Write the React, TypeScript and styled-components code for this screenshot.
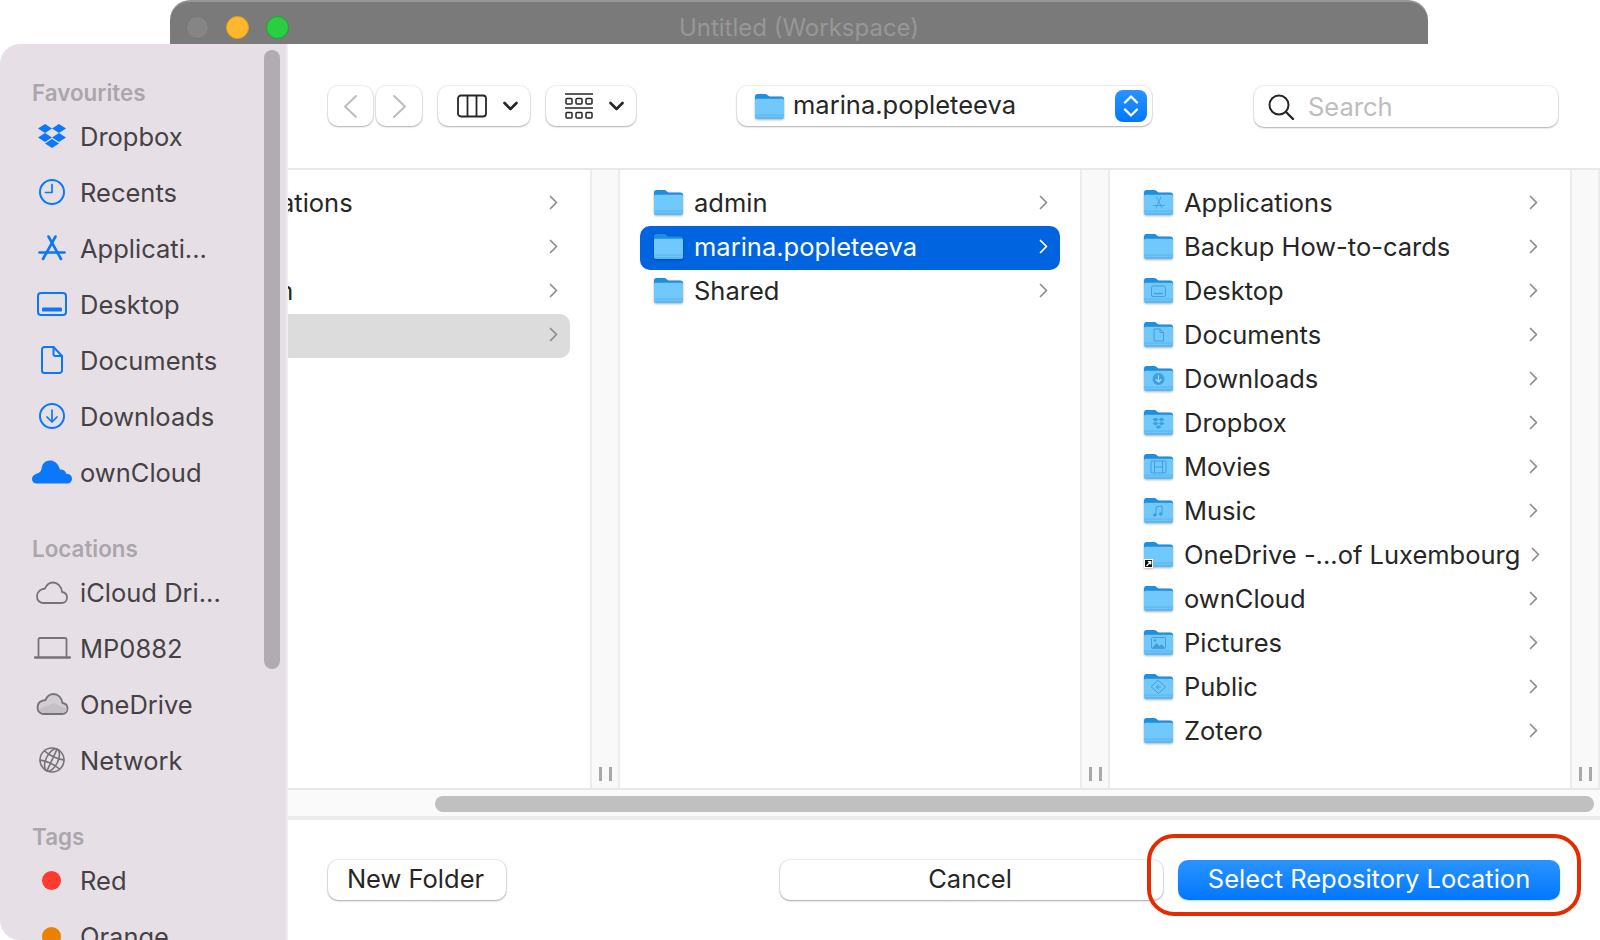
import styled, { createGlobalStyle } from "styled-components";
import { ReactNode } from "react";

const GlobalStyle = createGlobalStyle`
  html, body {
    margin: 0;
    padding: 0;
    width: 1600px;
    height: 940px;
    overflow: hidden;
    background: #fff;
    font-family: "Inter", "Liberation Sans", sans-serif;
  }
  * { box-sizing: border-box; }
`;

const Page = styled.div`
  width: 1600px;
  height: 940px;
  display: flex;
  flex-direction: column;
  overflow: hidden;
`;

const TitleBar = styled.div`
  flex: none;
  position: relative;
  margin-left: 170px;
  width: 1258px;
  height: 44px;
  background: #7a7a7a;
  border-top: 2px solid #969696;
  border-radius: 20px 20px 0 0;
  display: flex;
  align-items: center;
  padding: 8px 0 0 16px;
  gap: 17px;
`;

const Light = styled.span<{ $fill: string; $ring: string }>`
  width: 23px;
  height: 23px;
  border-radius: 50%;
  background: ${(p) => p.$fill};
  border: 1px solid ${(p) => p.$ring};
`;

const WindowTitle = styled.div`
  position: absolute;
  left: 0;
  right: 0;
  top: 11px;
  text-align: center;
  color: #979797;
  font-size: 24px;
  line-height: 30px;
`;

const Body = styled.div`
  flex: 1;
  display: flex;
  min-height: 0;
`;

const Sidebar = styled.aside`
  flex: none;
  position: relative;
  width: 288px;
  height: 896px;
  overflow: hidden;
  padding-top: 33px;
  background: #e6e0e6;
  border-right: 2px solid #efecef;
  border-radius: 20px 0 0 20px;
`;

const SideScroll = styled.div`
  position: absolute;
  left: 264px;
  top: 6px;
  width: 16px;
  height: 619px;
  border-radius: 8px;
  background: #b1acb2;
`;

const SideLabel = styled.div<{ $spaced?: boolean }>`
  height: 31px;
  margin-top: ${(p) => (p.$spaced ? "33px" : "0")};
  padding-left: 32px;
  color: #aba6ac;
  font-size: 22.4px;
  font-weight: 600;
  line-height: 31px;
`;

const SideRow = styled.div`
  height: 56px;
  display: flex;
  align-items: center;
  padding-left: 32px;
  gap: 8px;
  color: #454145;
  font-size: 25.5px;
  white-space: nowrap;
`;

const SideIcon = styled.span`
  flex: none;
  width: 40px;
  display: flex;
  align-items: center;
  justify-content: center;
`;

const TagDot = styled.span<{ $fill: string }>`
  width: 19px;
  height: 19px;
  margin-left: -1px;
  border-radius: 50%;
  background: ${(p) => p.$fill};
`;

const Main = styled.main`
  flex: 1;
  min-width: 0;
  display: flex;
  flex-direction: column;
  overflow: hidden;
  background: #fff;
`;

const Toolbar = styled.div`
  flex: none;
  height: 124px;
  padding: 42px 0 0 40px;
  display: flex;
  align-items: flex-start;
`;

const ToolButton = styled.div<{ $width: number; $gap?: number; $inset?: number }>`
  flex: none;
  width: ${(p) => p.$width}px;
  height: 40px;
  margin-left: ${(p) => p.$gap ?? 0}px;
  padding-left: ${(p) => p.$inset ?? 0}px;
  display: flex;
  align-items: center;
  justify-content: center;
  gap: 16px;
  background: #fff;
  border-radius: 10px;
  box-shadow: 0 0 0 1px rgba(0, 0, 0, 0.05), 0 1px 2px rgba(0, 0, 0, 0.28);
`;

const PathPopup = styled.div`
  flex: none;
  width: 415px;
  height: 40px;
  margin-left: 101px;
  display: flex;
  align-items: center;
  padding: 0 5px 0 18px;
  gap: 9px;
  border-radius: 10px;
  box-shadow: 0 0 0 1px rgba(0, 0, 0, 0.05), 0 1px 2px rgba(0, 0, 0, 0.28);
  color: #262626;
  font-size: 25.5px;
`;

const PopupLabel = styled.span`
  padding-bottom: 3px;
`;

const PopupStepper = styled.span`
  margin-left: auto;
  width: 32px;
  height: 32px;
  border-radius: 8px;
  display: flex;
  align-items: center;
  justify-content: center;
  background: linear-gradient(#2a93ff, #0277fe);
`;

const SearchBox = styled.div`
  flex: none;
  width: 304px;
  height: 41px;
  margin-left: 102px;
  display: flex;
  align-items: center;
  padding-left: 14px;
  gap: 14px;
  border-radius: 10px;
  box-shadow: 0 0 0 1px rgba(0, 0, 0, 0.05), 0 1px 2px rgba(0, 0, 0, 0.28);
  color: #bdbdbd;
  font-size: 25.5px;
`;

const Browser = styled.div`
  flex: none;
  height: 622px;
  border-top: 2px solid #e8e8e8;
  border-bottom: 2px solid #e8e8e8;
  overflow: hidden;
`;

const ColumnStrip = styled.div`
  display: flex;
  height: 100%;
  margin-left: -158px;
`;

const Column = styled.div`
  flex: none;
  width: 460px;
  padding: 12px 20px 0;
`;

const Handle = styled.div`
  flex: none;
  width: 30px;
  background: #f9f9f9;
  border-left: 2px solid #ececec;
  border-right: 2px solid #ececec;
  display: flex;
  justify-content: center;
  align-items: flex-end;
  gap: 7px;
  padding-bottom: 7px;
`;

const HandleBar = styled.span`
  width: 3px;
  height: 14px;
  background: #a8a8a8;
`;

const Row = styled.div<{ $state?: "active" | "muted" }>`
  height: 44px;
  display: flex;
  align-items: center;
  padding: 0 12px 4px 14px;
  gap: 11px;
  border-radius: 10px;
  white-space: nowrap;
  font-size: 25.5px;
  color: ${(p) => (p.$state === "active" ? "#fff" : "#262626")};
  background: ${(p) =>
    p.$state === "active" ? "#0064e1" : p.$state === "muted" ? "#dcdcdc" : "transparent"};
`;

const RowChevron = styled.svg`
  flex: none;
  margin-left: auto;
`;

const FolderSvg = styled.svg`
  flex: none;
  filter: drop-shadow(0 1px 1px rgba(0, 0, 0, 0.3));
`;

const HScroll = styled.div`
  flex: none;
  height: 30px;
  padding: 6px 6px 0 147px;
  background: #fafafa;
  border-bottom: 4px solid #ececec;
`;

const HThumb = styled.div`
  height: 16px;
  border-radius: 8px;
  background: #c0c0c0;
`;

const Footer = styled.div`
  flex: 1;
  padding: 40px 40px 0;
  display: flex;
  align-items: flex-start;
`;

const PushButton = styled.div<{ $width: number; $gap?: number }>`
  flex: none;
  width: ${(p) => p.$width}px;
  height: 40px;
  margin-left: ${(p) => p.$gap ?? 0}px;
  padding: 0 3px 3px 0;
  display: flex;
  align-items: center;
  justify-content: center;
  border-radius: 10px;
  background: #fff;
  box-shadow: 0 0 0 1px rgba(0, 0, 0, 0.07), 0 1px 2px rgba(0, 0, 0, 0.3);
  color: #262626;
  font-size: 25.5px;
`;

const PrimaryButton = styled(PushButton)`
  position: relative;
  padding-right: 0;
  background: linear-gradient(#2a93ff, #0277fe);
  box-shadow: 0 1px 2px rgba(0, 100, 220, 0.25);
  color: #fff;
`;

const CalloutRing = styled.span`
  position: absolute;
  left: -31px;
  right: -21px;
  top: -26px;
  bottom: -16px;
  border: 4.5px solid #e52b00;
  border-radius: 27px;
`;

const BLUE = "#0b77fb";
const GREY = "#767276";
const EMBLEM = "#3f9fe2";

const line = { fill: "none", strokeLinecap: "round", strokeLinejoin: "round" } as const;

const sideIcons: Record<string, ReactNode> = {
  dropbox: (
    <svg width="28" height="24" viewBox="0 0 28 24" fill={BLUE}>
      <polygon points="7,0 14,4.5 7,9 0,4.5" />
      <polygon points="21,0 28,4.5 21,9 14,4.5" />
      <polygon points="7,9 14,13.5 7,18 0,13.5" />
      <polygon points="21,9 28,13.5 21,18 14,13.5" />
      <polygon points="14,15 21,19.5 14,24 7,19.5" />
    </svg>
  ),
  recents: (
    <svg width="26" height="26" viewBox="0 0 26 26" stroke={BLUE} strokeWidth="2" {...line}>
      <circle cx="13" cy="13" r="12" />
      <path d="M13 5.5V13.5H6.5" strokeWidth="1.7" />
    </svg>
  ),
  apps: (
    <svg width="28" height="26" viewBox="0 0 28 26" stroke={BLUE} strokeWidth="2.6" {...line}>
      <path d="M10.5 1.5L23 24" />
      <path d="M17.5 1.5L5 24" />
      <path d="M1.5 17.5H26.5" />
    </svg>
  ),
  desktop: (
    <svg width="30" height="24" viewBox="0 0 30 24">
      <rect x="1" y="1" width="28" height="22" rx="3" fill="none" stroke={BLUE} strokeWidth="2" />
      <rect x="5" y="15.5" width="20" height="4" rx="1" fill={BLUE} />
    </svg>
  ),
  documents: (
    <svg width="22" height="28" viewBox="0 0 22 28" stroke={BLUE} strokeWidth="2" {...line}>
      <path d="M3.5 1H12.5L21 10V24.5A2.5 2.5 0 0 1 18.5 27H3.5A2.5 2.5 0 0 1 1 24.5V3.5A2.5 2.5 0 0 1 3.5 1Z" />
      <path d="M12.5 1V8A2 2 0 0 0 14.5 10H21" />
    </svg>
  ),
  downloads: (
    <svg width="26" height="26" viewBox="0 0 26 26" stroke={BLUE} strokeWidth="2" {...line}>
      <circle cx="13" cy="13" r="12" />
      <path d="M13 7V18.5M8 14L13 19L18 14" strokeWidth="1.7" />
    </svg>
  ),
  owncloud: (
    <svg width="40" height="24" viewBox="0 0 40 24" fill={BLUE}>
      <path d="M5 23.5H35C38 23.5 40 21.5 40 18.5C40 15.5 37.5 13.5 34.5 14C33.5 10 30 9 28 9.5C26 3 22 .5 18 .5C13 .5 10 4 9.5 9C9 11 8 12 6.5 13C3 14 0 16 0 19C0 22 2 23.5 5 23.5Z" />
    </svg>
  ),
  icloud: (
    <svg width="32" height="23" viewBox="0 0 32 23" stroke={GREY} strokeWidth="1.8" {...line}>
      <path d="M7.5 22H25.5C29 22 31 19.5 31 16.5C31 13.5 29 11.5 26 11C25.5 5.5 21.5 1.5 17 1.5C13 1.5 10.5 4 9 7.5C4.5 8 1 11 1 15.5C1 19.5 4 22 7.5 22Z" />
    </svg>
  ),
  laptop: (
    <svg width="37" height="22" viewBox="0 0 37 22" stroke={GREY} {...line}>
      <path d="M4.5 19V2.5A1.5 1.5 0 0 1 6 1H31A1.5 1.5 0 0 1 32.5 2.5V19" strokeWidth="1.8" />
      <path d="M1 20.5H36" strokeWidth="2.4" />
    </svg>
  ),
  onedrive: (
    <svg width="33" height="22" viewBox="0 0 32 22">
      <path d="M7.5 21H25.5C29 21 31 18.5 31 15.5C31 12.5 29 10.5 26 10C25.5 5 21.5 1 17 1C13 1 10.5 3.5 9 7C4.5 7.5 1 10 1 14.5C1 18.5 4 21 7.5 21Z" fill="#d2cdd3" stroke={GREY} strokeWidth="1.8" />
      <path d="M3 16L17 10L30 16V18L26 20H7L3 18Z" fill="#c4bfc6" />
    </svg>
  ),
  network: (
    <svg width="26" height="26" viewBox="0 0 26 26" stroke={GREY} strokeWidth="1.6" {...line}>
      <circle cx="13" cy="13" r="12" />
      <g transform="rotate(25 13 13)">
        <ellipse cx="13" cy="13" rx="6" ry="12" />
        <path d="M2.5 8C8 10 18 10 23.5 8M2.5 18C8 16 18 16 23.5 18" />
        <path d="M13 1V25" />
      </g>
    </svg>
  ),
};

const emblems: Record<string, ReactNode> = {
  apps: (
    <g stroke={EMBLEM} strokeWidth="0.9" {...line}>
      <path d="M12.5 9L18 20M17 9L12 20M9.5 17.5H20.5" />
    </g>
  ),
  desktop: (
    <g stroke={EMBLEM} strokeWidth="1" fill="none">
      <rect x="7.5" y="10" width="14" height="10.5" rx="1.5" />
      <path d="M10 17.5H19" strokeWidth="1.4" />
    </g>
  ),
  documents: (
    <g stroke={EMBLEM} strokeWidth="1" {...line}>
      <path d="M10.5 9H16L19.5 12.5V21H10.5ZM16 9V12.5H19.5" />
    </g>
  ),
  downloads: (
    <g>
      <circle cx="14.5" cy="15" r="6" fill={EMBLEM} />
      <path d="M14.5 11.5V17.5M12 15.5L14.5 18L17 15.5" stroke="#a5defe" strokeWidth="1.1" {...line} />
    </g>
  ),
  dropbox: (
    <g fill={EMBLEM}>
      <polygon points="11.5,9.5 14.5,11.5 11.5,13.5 8.5,11.5" />
      <polygon points="17.5,9.5 20.5,11.5 17.5,13.5 14.5,11.5" />
      <polygon points="11.5,13.5 14.5,15.5 11.5,17.5 8.5,15.5" />
      <polygon points="17.5,13.5 20.5,15.5 17.5,17.5 14.5,15.5" />
      <polygon points="14.5,17 17.5,19 14.5,21 11.5,19" />
    </g>
  ),
  movies: (
    <g stroke={EMBLEM} strokeWidth="1" fill="none">
      <rect x="7" y="9" width="15" height="12" rx="1" />
      <path d="M10.5 9V21M18.5 9V21M10.5 15H18.5" />
    </g>
  ),
  music: (
    <g stroke={EMBLEM} strokeWidth="1" fill={EMBLEM}>
      <path d="M12 19V11L18 10V18" fill="none" />
      <circle cx="10.8" cy="19" r="1.3" />
      <circle cx="16.8" cy="18" r="1.3" />
    </g>
  ),
  pictures: (
    <g>
      <rect x="7.5" y="9.5" width="14" height="11" rx="1" fill="none" stroke={EMBLEM} strokeWidth="1" />
      <path d="M8 20L12.5 15L15.5 18L17.5 16L21 20Z" fill={EMBLEM} />
      <circle cx="11" cy="12.5" r="1.2" fill={EMBLEM} />
    </g>
  ),
  public: (
    <g stroke={EMBLEM} strokeWidth="1" {...line}>
      <path d="M14.5 8.5L21.5 15L14.5 21.5L7.5 15Z" />
      <path d="M16.5 15H12.5M14.5 12.5L12.5 15L14.5 17.5" />
    </g>
  ),
  alias: (
    <g>
      <rect x="0" y="19" width="9" height="9" fill="#fff" />
      <path d="M1 20H8V27H1Z" fill="#111" />
      <path d="M2.5 26L6.5 22M3.8 21.6H6.8V24.6" stroke="#fff" strokeWidth="1.1" fill="none" />
    </g>
  ),
};

function Folder({ emblem }: { emblem?: string }) {
  return (
    <FolderSvg width="29" height="28" viewBox="0 0 29 28">
      <path d="M0 5C0 3 .8 2 2.5 2H10C11.5 2 12 2.6 13 3.5C13.8 4.2 14.4 4.5 15.5 4.5H26.5C28 4.5 29 5.5 29 7V14H0Z" fill="#1f8edb" />
      <path d="M0 8.5C0 7.4 .6 6.8 1.6 6.8H27.4C28.4 6.8 29 7.4 29 8.5V24.5C29 26 28 27 26.5 27H2.5C1 27 0 26 0 24.5Z" fill="#70c8fb" />
      <path d="M0 22.5H29V24.5C29 26 28 27 26.5 27H2.5C1 27 0 26 0 24.5Z" fill="#5bb8f2" />
      <path d="M0 24.2H29" stroke="#7fd0fd" strokeWidth="0.7" />
      {emblem && emblems[emblem]}
    </FolderSvg>
  );
}

function Chevron({ color = "#8c8c8c" }: { color?: string }) {
  return (
    <RowChevron width="9" height="15" viewBox="0 0 9 15" stroke={color} strokeWidth="1.7" {...line}>
      <path d="M1.5 1.5L7.5 7.5L1.5 13.5" />
    </RowChevron>
  );
}

function DownCaret() {
  return (
    <svg width="15" height="10" viewBox="0 0 15 10" stroke="#262626" strokeWidth="2.6" {...line}>
      <path d="M1.5 2L7.5 8L13.5 2" />
    </svg>
  );
}

type Entry = { name: string; emblem?: string; state?: "active" | "muted" };

const rootEntries: Entry[] = [
  { name: "Applications" },
  { name: "Library" },
  { name: "System" },
  { name: "Users", state: "muted" },
];

const userEntries: Entry[] = [
  { name: "admin" },
  { name: "marina.popleteeva", state: "active" },
  { name: "Shared" },
];

const homeEntries: Entry[] = [
  { name: "Applications", emblem: "apps" },
  { name: "Backup How-to-cards" },
  { name: "Desktop", emblem: "desktop" },
  { name: "Documents", emblem: "documents" },
  { name: "Downloads", emblem: "downloads" },
  { name: "Dropbox", emblem: "dropbox" },
  { name: "Movies", emblem: "movies" },
  { name: "Music", emblem: "music" },
  { name: "OneDrive -...of Luxembourg", emblem: "alias" },
  { name: "ownCloud" },
  { name: "Pictures", emblem: "pictures" },
  { name: "Public", emblem: "public" },
  { name: "Zotero" },
];

function FileColumn({ entries }: { entries: Entry[] }) {
  return (
    <>
      <Column>
        {entries.map((e) => (
          <Row key={e.name} $state={e.state}>
            <Folder emblem={e.emblem} />
            {e.name}
            <Chevron color={e.state === "active" ? "#fff" : "#8c8c8c"} />
          </Row>
        ))}
      </Column>
      <Handle>
        <HandleBar />
        <HandleBar />
      </Handle>
    </>
  );
}

const favourites = [
  ["dropbox", "Dropbox"],
  ["recents", "Recents"],
  ["apps", "Applicati..."],
  ["desktop", "Desktop"],
  ["documents", "Documents"],
  ["downloads", "Downloads"],
  ["owncloud", "ownCloud"],
];

const locations = [
  ["icloud", "iCloud Dri..."],
  ["laptop", "MP0882"],
  ["onedrive", "OneDrive"],
  ["network", "Network"],
];

export default function App() {
  return (
    <Page>
      <GlobalStyle />
      <TitleBar>
        <Light $fill="#858585" $ring="#777" />
        <Light $fill="#ffb82e" $ring="#e09e1e" />
        <Light $fill="#29ce42" $ring="#18a82c" />
        <WindowTitle>Untitled (Workspace)</WindowTitle>
      </TitleBar>
      <Body>
        <Sidebar>
          <SideScroll />
          <SideLabel>Favourites</SideLabel>
          {favourites.map(([icon, name]) => (
            <SideRow key={name}>
              <SideIcon>{sideIcons[icon]}</SideIcon>
              {name}
            </SideRow>
          ))}
          <SideLabel $spaced>Locations</SideLabel>
          {locations.map(([icon, name]) => (
            <SideRow key={name}>
              <SideIcon>{sideIcons[icon]}</SideIcon>
              {name}
            </SideRow>
          ))}
          <SideLabel $spaced>Tags</SideLabel>
          <SideRow>
            <SideIcon>
              <TagDot $fill="#ff3b30" />
            </SideIcon>
            Red
          </SideRow>
          <SideRow>
            <SideIcon>
              <TagDot $fill="#ee8000" />
            </SideIcon>
            Orange
          </SideRow>
        </Sidebar>
        <Main>
          <Toolbar>
            <ToolButton $width={45}>
              <svg width="15" height="25" viewBox="0 0 15 25" stroke="#bdbdbd" strokeWidth="2" {...line}>
                <path d="M13 2L2 12.5L13 23" />
              </svg>
            </ToolButton>
            <ToolButton $width={46} $gap={3}>
              <svg width="15" height="25" viewBox="0 0 15 25" stroke="#bdbdbd" strokeWidth="2" {...line}>
                <path d="M2 2L13 12.5L2 23" />
              </svg>
            </ToolButton>
            <ToolButton $width={92} $gap={16} $inset={6}>
              <svg width="30" height="24" viewBox="0 0 30 24" fill="none" stroke="#262626" strokeWidth="1.8">
                <rect x="1" y="1.5" width="28" height="21" rx="3" />
                <path d="M10.5 1.5V22.5M19.5 1.5V22.5" />
              </svg>
              <DownCaret />
            </ToolButton>
            <ToolButton $width={90} $gap={16} $inset={6}>
              <svg width="28" height="27" viewBox="0 0 28 27" fill="none" stroke="#262626">
                <path d="M0 1H28M0 15H28" strokeWidth="1.6" />
                <rect x="1" y="5.5" width="6" height="5.5" rx="1" strokeWidth="1.5" />
                <rect x="11" y="5.5" width="6" height="5.5" rx="1" strokeWidth="1.5" />
                <rect x="21" y="5.5" width="6" height="5.5" rx="1" strokeWidth="1.5" />
                <rect x="1" y="19.5" width="6" height="5.5" rx="1" strokeWidth="1.5" />
                <rect x="11" y="19.5" width="6" height="5.5" rx="1" strokeWidth="1.5" />
                <rect x="21" y="19.5" width="6" height="5.5" rx="1" strokeWidth="1.5" />
              </svg>
              <DownCaret />
            </ToolButton>
            <PathPopup>
              <Folder />
              <PopupLabel>marina.popleteeva</PopupLabel>
              <PopupStepper>
                <svg width="16" height="24" viewBox="0 0 16 24" stroke="#fff" strokeWidth="2.4" fill="none" strokeLinecap="round" strokeLinejoin="round">
                  <path d="M2 8.5L8 2.5L14 8.5M2 15.5L8 21.5L14 15.5" />
                </svg>
              </PopupStepper>
            </PathPopup>
            <SearchBox>
              <svg width="26" height="26" viewBox="0 0 26 26" fill="none" stroke="#262626" strokeWidth="2" strokeLinecap="round">
                <circle cx="11" cy="11" r="9.5" />
                <path d="M18 18L25 25" strokeWidth="2.4" />
              </svg>
              Search
            </SearchBox>
          </Toolbar>
          <Browser>
            <ColumnStrip>
              <FileColumn entries={rootEntries} />
              <FileColumn entries={userEntries} />
              <FileColumn entries={homeEntries} />
            </ColumnStrip>
          </Browser>
          <HScroll>
            <HThumb />
          </HScroll>
          <Footer>
            <PushButton $width={178}>New Folder</PushButton>
            <PushButton $width={383} $gap={274}>Cancel</PushButton>
            <PrimaryButton $width={382} $gap={15}>
              Select Repository Location
              <CalloutRing />
            </PrimaryButton>
          </Footer>
        </Main>
      </Body>
    </Page>
  );
}
